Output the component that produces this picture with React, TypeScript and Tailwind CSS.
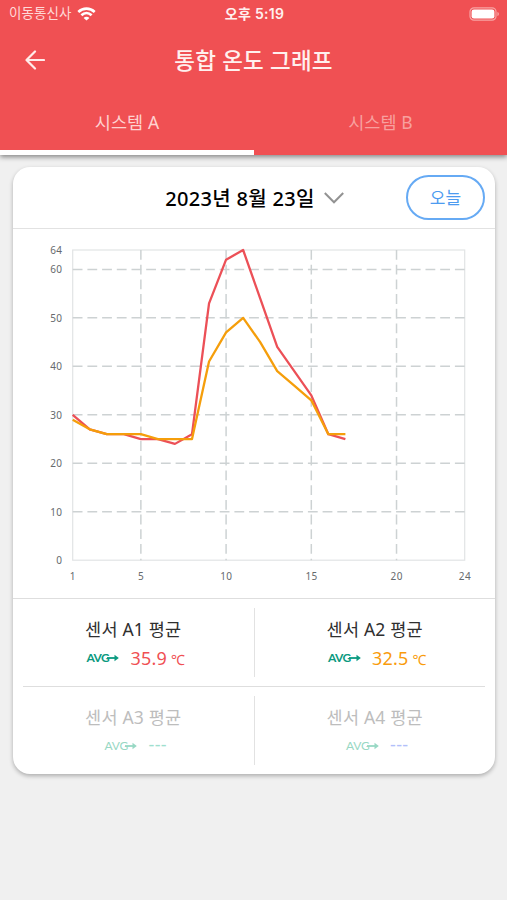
import { clsx } from "clsx";

const X_TICKS = [1, 5, 10, 15, 20, 24];
const Y_TICKS = [0, 10, 20, 30, 40, 50, 60, 64];

const SERIES = [
  {
    id: "A1",
    color: "#ec5057",
    values: [30, 27, 26, 26, 25, 25, 24, 26, 53, 62, 64, 54, 44, 39, 34, 26, 25],
  },
  {
    id: "A2",
    color: "#f59e0b",
    values: [29, 27, 26, 26, 26, 25, 25, 25, 41, 47, 50, 45, 39, 36, 33, 26, 26],
  },
];

const LEFT = 59.7;
const RIGHT = 451.7;
const TOP = 21;
const BOTTOM = 331.2;

const toX = (hour: number) => LEFT + ((hour - 1) * (RIGHT - LEFT)) / 23;
const toY = (temp: number) => BOTTOM - (temp * (BOTTOM - TOP)) / 64;

const TemperatureChart: React.FC = () => {
  return (
    <svg className="block w-full h-[369px]" viewBox="0 0 482 369">
      <rect
        x={LEFT}
        y={TOP}
        width={RIGHT - LEFT}
        height={BOTTOM - TOP}
        fill="none"
        stroke="#e2e4e5"
        strokeWidth="1.2"
      />
      <g stroke="#cdd2d3" strokeWidth="1.5" strokeDasharray="9.8 4.9">
        {Y_TICKS.slice(1, -1).map((tick) => (
          <line key={tick} x1={LEFT} x2={RIGHT} y1={toY(tick)} y2={toY(tick)} />
        ))}
        {X_TICKS.slice(1, -1).map((tick) => (
          <line key={tick} x1={toX(tick)} x2={toX(tick)} y1={TOP} y2={BOTTOM} />
        ))}
      </g>
      {SERIES.map((item) => (
        <polyline
          key={item.id}
          points={item.values.map((v, i) => `${toX(i + 1)},${toY(v)}`).join(" ")}
          fill="none"
          stroke={item.color}
          strokeWidth="2.3"
          strokeLinejoin="round"
        />
      ))}
      <g className="text-[10px] tracking-[0.4px]" fill="#666a6d">
        {Y_TICKS.map((tick) => (
          <text key={tick} x={49.4} y={toY(tick) + 3.8} textAnchor="end">
            {tick}
          </text>
        ))}
        {X_TICKS.map((tick) => (
          <text key={tick} x={toX(tick) + 0.2} y={351} textAnchor="middle">
            {tick}
          </text>
        ))}
      </g>
    </svg>
  );
};

interface SensorCellProps {
  name: string;
  value?: string;
  valueClass: string;
}

const SensorCell: React.FC<SensorCellProps> = ({ name, value, valueClass }) => {
  return (
    <div className="flex-1 flex flex-col items-center pt-[18px]">
      <p
        className={clsx(
          "text-[17.5px] leading-6 tracking-[0.2px] whitespace-nowrap",
          value ? "text-[#2f2f2f]" : "text-[#bdbdbd]"
        )}
      >
        {name}
      </p>
      <div className="flex items-center h-[34px] gap-[11px] pl-[5px]">
        <span
          className={clsx(
            "flex items-center text-[12px] font-['Lato',sans-serif]",
            value ? "text-[#0b9a80] font-bold" : "text-[#98d8c4] font-normal"
          )}
        >
          <span className={clsx("w-[22px]", value ? "tracking-[-0.6px]" : "tracking-[-0.2px]")}>
            AVG
          </span>
          <svg className="w-[12px] h-[8px] -ml-[1px]" viewBox="0 0 12 8">
            <path d="M0 4H9" stroke="currentColor" strokeWidth="1.8" />
            <path d="M7.5 .8L11.8 4L7.5 7.2Z" fill="currentColor" />
          </svg>
        </span>
        {value ? (
          <span className={clsx("text-[18px] tracking-[0.2px] whitespace-nowrap", valueClass)}>
            {value} <span className="-ml-[1px] text-[14px]">℃</span>
          </span>
        ) : (
          <span className={clsx("text-[18px] leading-5 -mt-[5px] tracking-[0.4px]", valueClass)}>
            ---
          </span>
        )}
      </div>
    </div>
  );
};

const App: React.FC = () => {
  return (
    <div className="w-full h-[900px] bg-[#f0f0f0] overflow-hidden font-['Noto_Sans','Noto_Sans_CJK_KR',sans-serif]">
      <header className="h-[155px] flex flex-col bg-[#f05053] text-white shadow-[0_2px_5px_rgba(0,0,0,0.45)]">
        <div className="h-[27px] grid grid-cols-3 items-center pl-[9px] pr-[7px]">
          <div className="flex items-center gap-[5px] text-[#ffd9d8]">
            <span className="text-[13.5px] tracking-[0.1px]">이동통신사</span>
            <svg className="w-[19px] h-[14px]" viewBox="0 0 18 14" fill="none" stroke="#fff" strokeWidth="2.6">
              <path d="M.8 5C5.5 .5 12.5 .5 17.2 5" />
              <path d="M3.9 8.3C7 5.3 11 5.3 14.1 8.3" />
              <path d="M9 13.6L6.1 10.9C7.7 9.4 10.3 9.4 11.9 10.9Z" fill="#fff" stroke="none" />
            </svg>
          </div>
          <p className="text-center text-[14px] font-semibold tracking-[0.3px] text-[#fff0ef] font-['Inter','Noto_Sans_CJK_KR',sans-serif]">
            오후 5:19
          </p>
          <svg className="w-[31px] h-[14px] justify-self-end" viewBox="0 0 31 14">
            <rect x="1" y=".8" width="26" height="12.4" rx="4" fill="none" stroke="#f7a4a4" strokeWidth="1.2" />
            <rect x="2.6" y="2.4" width="22.8" height="9.2" rx="2.4" fill="#fff" />
            <path d="M28.4 5C30.4 5.4 30.4 8.6 28.4 9Z" fill="#f7a4a4" />
          </svg>
        </div>
        <div className="h-[66px] grid grid-cols-[60px_1fr_60px] items-center">
          <svg
            className="w-[20px] h-[20px] ml-[25px]"
            viewBox="0 0 20 20"
            fill="none"
            stroke="#ffecea"
            strokeWidth="2.2"
            strokeLinecap="round"
            strokeLinejoin="round"
          >
            <path d="M19 10H2M10 1.5L1.5 10L10 18.5" />
          </svg>
          <h1 className="pt-0.5 text-center text-[22.5px] font-medium tracking-[0.2px] text-[#fff0ee]">
            통합 온도 그래프
          </h1>
        </div>
        <nav className="flex-1 flex text-[17.5px] tracking-[0.1px]">
          <button className="w-[254px] pt-0.5 border-b-[5px] border-white text-[#ffd2d0]">
            시스템 A
          </button>
          <button className="flex-1 pt-0.5 border-b-[5px] border-transparent text-[#f8a09f]">
            시스템 B
          </button>
        </nav>
      </header>

      <main className="mt-3 ml-[13px] w-[482px] h-[607px] rounded-[17px] bg-white shadow-[0_2px_4px_rgba(0,0,0,0.28)]">
        <div className="h-[62px] grid grid-cols-[1fr_auto_1fr] items-center pr-[10px] border-b border-[#e2e2e2]">
          <div className="col-start-2 flex items-center gap-[9px] ml-[11px]">
            <p className="pt-0.5 text-[20px] font-medium tracking-[0.3px] text-black whitespace-nowrap">
              2023년 8월 23일
            </p>
            <svg className="w-[20px] h-[12px]" viewBox="0 0 20 12" fill="none" stroke="#929292" strokeWidth="2">
              <path d="M.8 1L10 10.3L19.2 1" />
            </svg>
          </div>
          <button className="justify-self-end w-[79px] h-[45px] rounded-full border-2 border-[#66aaf4] text-[17px] text-[#4c9bf0]">
            오늘
          </button>
        </div>

        <TemperatureChart />

        <section className="border-t border-[#dedede]">
          <div className="h-[87px] flex">
            <SensorCell name="센서 A1 평균" value="35.9" valueClass="text-[#f05053]" />
            <div className="w-px my-[9px] bg-[#e2e2e2]" />
            <SensorCell name="센서 A2 평균" value="32.5" valueClass="text-[#f99b0c]" />
          </div>
          <hr className="mx-[10px] border-[#dedede]" />
          <div className="h-[87px] flex">
            <SensorCell name="센서 A3 평균" valueClass="text-[#a0dfcf]" />
            <div className="w-px my-[9px] bg-[#e2e2e2]" />
            <SensorCell name="센서 A4 평균" valueClass="text-[#b2c0fa]" />
          </div>
        </section>
      </main>
    </div>
  );
};

export default App;
